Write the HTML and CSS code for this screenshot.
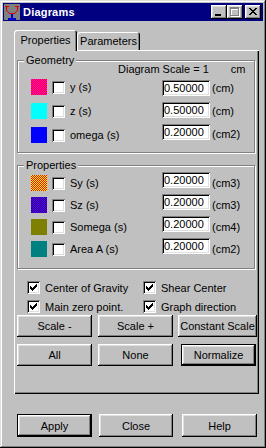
FILE: index.html
```html
<!DOCTYPE html>
<html lang="en">
<head>
    <meta charset="UTF-8">
    <title>Diagrams</title>
    <link rel="stylesheet" href="styles.css">
</head>
<body>
    <div class="window">
        <div class="titlebar">
            <svg class="app-icon" width="16" height="16" viewBox="0 0 16 16" shape-rendering="crispEdges">
                <rect width="16" height="16" fill="#808080"/>
                <path d="M1 2h4v1h-2v4h1v1h1v1h6v-1h1v-1h1v-4h-2v-1h4v1h-1v4h-1v1h-1v1h-1v1h-6v-1h-1v-1h-1v-1h-1v-4h-1z" fill="#e00000"/>
                <path d="M7 10h2v4h3v2h-8v-2h3z" fill="#0000e0"/>
            </svg>
            <span class="title">Diagrams</span>
            <div class="title-buttons">
                <button class="tbtn">
                    <svg width="16" height="14" viewBox="0 0 16 14" shape-rendering="crispEdges"><rect x="4" y="9" width="6" height="2" fill="#000"/></svg>
                </button>
                <button class="tbtn">
                    <svg width="16" height="14" viewBox="0 0 16 14" shape-rendering="crispEdges">
                        <path d="M4 3h9v9h-9zM5 5v6h7v-6z" fill="#fff"/>
                        <path d="M3 2h9v9h-9zM4 4v6h7v-6z" fill="#808080"/>
                    </svg>
                </button>
                <button class="tbtn close">
                    <svg width="16" height="14" viewBox="0 0 16 14" shape-rendering="crispEdges">
                        <path d="M4 3h2v1h-2zM10 3h2v1h-2zM5 4h2v1h-2zM9 4h2v1h-2zM6 5h4v1h-4zM7 6h2v1h-2zM6 7h4v1h-4zM5 8h2v1h-2zM9 8h2v1h-2zM4 9h2v1h-2zM10 9h2v1h-2z" fill="#000"/>
                    </svg>
                </button>
            </div>
        </div>

        <div class="content">
            <div class="tabs">
                <div class="tab active">Properties</div>
                <div class="tab">Parameters</div>
            </div>

            <div class="panel">
                <fieldset class="group geometry">
                    <legend>Geometry</legend>
                    <div class="scale-head">Diagram Scale = 1<span class="scale-unit">cm</span></div>
                    <div class="rows">
                        <div class="col-items">
                            <div class="item"><span class="swatch sw-y"></span><span class="check"></span>y (s)</div>
                            <div class="item"><span class="swatch sw-z"></span><span class="check"></span>z (s)</div>
                            <div class="item"><span class="swatch sw-omega"></span><span class="check"></span>omega (s)</div>
                        </div>
                        <div class="col-inputs">
                            <input class="field" type="text" value="0.50000">
                            <input class="field" type="text" value="0.50000">
                            <input class="field" type="text" value="0.20000">
                        </div>
                        <div class="col-units">
                            <span>(cm)</span>
                            <span>(cm)</span>
                            <span>(cm2)</span>
                        </div>
                    </div>
                </fieldset>

                <fieldset class="group properties">
                    <legend>Properties</legend>
                    <div class="rows">
                        <div class="col-items">
                            <div class="item"><span class="swatch sw-sy"></span><span class="check"></span>Sy (s)</div>
                            <div class="item"><span class="swatch sw-sz"></span><span class="check"></span>Sz (s)</div>
                            <div class="item"><span class="swatch sw-somega"></span><span class="check"></span>Somega (s)</div>
                            <div class="item"><span class="swatch sw-area"></span><span class="check"></span>Area A (s)</div>
                        </div>
                        <div class="col-inputs">
                            <input class="field" type="text" value="0.20000">
                            <input class="field" type="text" value="0.20000">
                            <input class="field" type="text" value="0.20000">
                            <input class="field" type="text" value="0.20000">
                        </div>
                        <div class="col-units">
                            <span>(cm3)</span>
                            <span>(cm3)</span>
                            <span>(cm4)</span>
                            <span>(cm2)</span>
                        </div>
                    </div>
                </fieldset>

                <div class="options">
                    <div class="opt"><span class="check"><svg class="tick" width="7" height="7" viewBox="0 0 7 7" shape-rendering="crispEdges"><path d="M6 0h1v1h-1zM5 1h2v1h-2zM0 2h1v1h-1zM4 2h3v1h-3zM0 3h2v1h-2zM3 3h3v1h-3zM0 4h5v1h-5zM1 5h3v1h-3zM2 6h1v1h-1z"/></svg></span>Center of Gravity</div>
                    <div class="opt"><span class="check"><svg class="tick" width="7" height="7" viewBox="0 0 7 7" shape-rendering="crispEdges"><path d="M6 0h1v1h-1zM5 1h2v1h-2zM0 2h1v1h-1zM4 2h3v1h-3zM0 3h2v1h-2zM3 3h3v1h-3zM0 4h5v1h-5zM1 5h3v1h-3zM2 6h1v1h-1z"/></svg></span>Shear Center</div>
                    <div class="opt"><span class="check"><svg class="tick" width="7" height="7" viewBox="0 0 7 7" shape-rendering="crispEdges"><path d="M6 0h1v1h-1zM5 1h2v1h-2zM0 2h1v1h-1zM4 2h3v1h-3zM0 3h2v1h-2zM3 3h3v1h-3zM0 4h5v1h-5zM1 5h3v1h-3zM2 6h1v1h-1z"/></svg></span>Main zero point.</div>
                    <div class="opt"><span class="check"><svg class="tick" width="7" height="7" viewBox="0 0 7 7" shape-rendering="crispEdges"><path d="M6 0h1v1h-1zM5 1h2v1h-2zM0 2h1v1h-1zM4 2h3v1h-3zM0 3h2v1h-2zM3 3h3v1h-3zM0 4h5v1h-5zM1 5h3v1h-3zM2 6h1v1h-1z"/></svg></span>Graph direction</div>
                </div>

                <div class="btn-row first">
                    <button class="btn">Scale -</button>
                    <button class="btn">Scale +</button>
                    <button class="btn wide">Constant Scale</button>
                </div>
                <div class="btn-row second">
                    <button class="btn">All</button>
                    <button class="btn">None</button>
                    <button class="btn default push">Normalize</button>
                </div>
            </div>

            <div class="footer">
                <button class="btn default">Apply</button>
                <button class="btn narrow">Close</button>
                <button class="btn push">Help</button>
            </div>
        </div>
    </div>
</body>
</html>
```

FILE: styles.css
```css
* {
    box-sizing: border-box;
}

body {
    margin: 0;
    background: #c0c0c0;
    font-family: 'Liberation Sans', Arial, sans-serif;
    font-size: 11px;
    color: #000;
}

.window {
    width: 266px;
    height: 448px;
    padding: 3px;
    background: #c0c0c0;
    box-shadow: inset -1px -1px #000, inset 1px 1px #dfdfdf, inset -2px -2px #808080, inset 2px 2px #fff;
}

/* title bar */
.titlebar {
    height: 18px;
    display: flex;
    align-items: center;
    padding: 0 2px 0 1px;
    background: #000080;
    color: #fff;
}

.app-icon {
    display: block;
    margin-right: 3px;
}

.title {
    font-weight: bold;
    letter-spacing: 0.2px;
}

.title-buttons {
    margin-left: auto;
    display: flex;
}

.tbtn {
    width: 16px;
    height: 14px;
    padding: 0;
    border: none;
    background: #c0c0c0;
    box-shadow: inset -1px -1px #000, inset 1px 1px #fff, inset -2px -2px #808080, inset 2px 2px #dfdfdf;
}

.tbtn svg {
    display: block;
}

.tbtn.close {
    margin-left: 2px;
}

/* tabs */
.content {
    padding: 9px 4px 0 11px;
}

.tabs {
    display: flex;
    align-items: flex-end;
    height: 20px;
}

.tab {
    width: 63px;
    height: 18px;
    padding-top: 2px;
    text-align: center;
    line-height: 15px;
    background: #c0c0c0;
    border-radius: 3px 3px 0 0;
    box-shadow: inset 1px 1px #fff, inset -1px 0 #000, inset -2px 0 #808080;
}

.tab.active {
    height: 21px;
    margin-bottom: -1px;
    padding-top: 3px;
    position: relative;
    z-index: 1;
}

.panel {
    width: 245px;
    height: 344px;
    padding-left: 3px;
    overflow: hidden;
    box-shadow: inset 1px 1px #fff, inset -1px -1px #000, inset -2px -2px #808080;
}

/* group boxes */
.group {
    width: 238px;
    margin: 4px 0 0;
    padding: 0 0 0 13px;
    border: 1px solid #808080;
    box-shadow: inset 1px 1px #fff, 1px 1px #fff;
}

.group legend {
    margin-left: -7px;
    padding: 0 2px;
    line-height: 13px;
    background: #c0c0c0;
}

.geometry {
    height: 99px;
}

.properties {
    height: 110px;
    margin-top: 6px;
}

.scale-head {
    margin: -4px 0 0 87px;
    line-height: 12px;
}

.scale-unit {
    margin-left: 22px;
}

.rows {
    display: grid;
    grid-template-columns: 131px 48px auto;
}

.col-items,
.col-inputs,
.col-units {
    display: flex;
    flex-direction: column;
}

.item {
    display: flex;
    align-items: center;
    height: 24px;
}

.geometry .col-inputs {
    padding-top: 5px;
    gap: 6px;
}

.geometry .col-units {
    padding-top: 2px;
}

.geometry .col-units span {
    line-height: 23px;
}

.properties .item {
    height: 22px;
}

.properties .col-inputs {
    gap: 6px;
}

.properties .col-units span {
    line-height: 22px;
}

.col-units {
    padding-left: 2px;
}

.swatch {
    width: 16px;
    height: 16px;
    margin-right: 5px;
}

.sw-y { background: repeating-conic-gradient(#ff0000 0 25%, #ff00ff 0 50%) 0 0 / 2px 2px; }
.sw-z { background: #00ffff; }
.sw-omega { background: #0000ff; }
.sw-sy { background: repeating-conic-gradient(#ff0000 0 25%, #ffff00 0 50%) 0 0 / 2px 2px; }
.sw-sz { background: repeating-conic-gradient(#0000ff 0 25%, #800080 0 50%) 0 0 / 2px 2px; }
.sw-somega { background: #808000; }
.sw-area { background: #008080; }

.check {
    flex: none;
    width: 13px;
    height: 13px;
    margin-right: 5px;
    padding: 3px;
    background: #fff;
    box-shadow: inset 1px 1px #808080, inset -1px -1px #fff, inset 2px 2px #000, inset -2px -2px #dfdfdf;
}

.tick {
    display: block;
}

.field {
    width: 48px;
    height: 16px;
    padding: 0 2px;
    border: none;
    font: inherit;
    background: #fff;
    box-shadow: inset 1px 1px #808080, inset -1px -1px #fff, inset 2px 2px #000, inset -2px -2px #dfdfdf;
}

/* check options */
.options {
    display: grid;
    grid-template-columns: 116px auto;
    row-gap: 6px;
    margin: 12px 0 0 10px;
}

.opt {
    display: flex;
    align-items: center;
    height: 13px;
}

/* buttons */
.btn-row {
    display: flex;
    gap: 6px;
}

.btn-row.first {
    margin-top: 2px;
}

.btn-row.second {
    margin-top: 7px;
}

.btn {
    width: 75px;
    height: 22px;
    padding: 0;
    border: none;
    font: inherit;
    color: #000;
    background: #c0c0c0;
    box-shadow: inset -1px -1px #000, inset 1px 1px #fff, inset -2px -2px #808080, inset 2px 2px #dfdfdf;
}

.btn.default {
    border: 1px solid #000;
}

.btn.wide {
    width: 79px;
    margin-left: -1px;
}

.btn.narrow {
    width: 74px;
}

.btn.push {
    margin-left: 2px;
}

.footer {
    display: flex;
    gap: 7px;
    margin-top: 20px;
    padding-left: 3px;
}

.footer .btn {
    height: 23px;
}
```
